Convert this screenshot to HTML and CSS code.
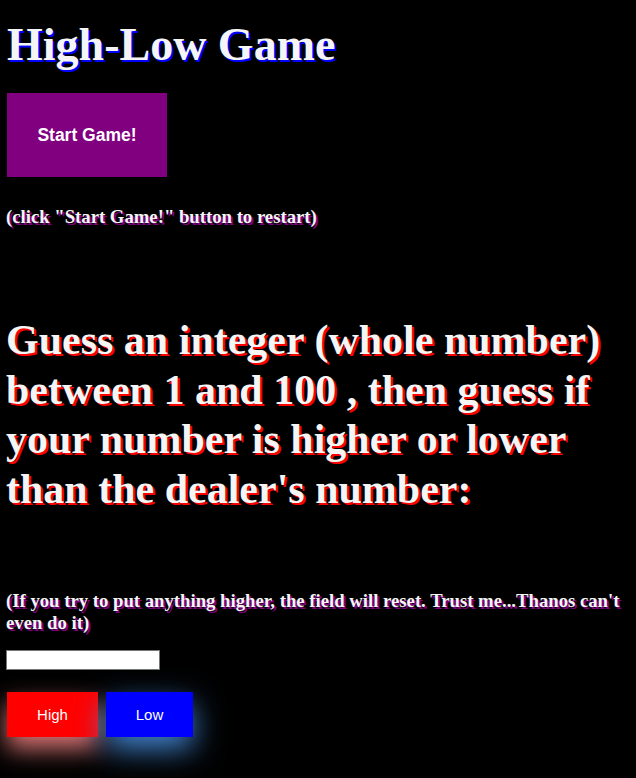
FILE: index.html
```html
<!DOCTYPE html>
<html>
<head>
<meta charset="utf-8">
<title>High-Low Game</title>
<link rel="stylesheet" href="styles.css">
</head>
<body>
<h1 class="title">High-Low Game</h1>
<button class="start-btn">Start Game!</button>
<h3 class="note">(click "Start Game!" button to restart)</h3>
<h1 class="prompt">Guess an integer (whole number) between 1 and 100 , then guess if your number is higher or lower than the dealer's number:</h1>
<h3 class="note">(If you try to put anything higher, the field will reset. Trust me...Thanos can't even do it)</h3>
<input class="guess" type="text">
<div class="choices">
  <button class="choice high">High</button>
  <button class="choice low">Low</button>
</div>
</body>
</html>
```

FILE: styles.css
```css
html, body {
  background: #000;
}
body {
  margin: 0;
  padding: 18px 6px 40px 6px;
  font-family: "Liberation Serif", "Times New Roman", serif;
  color: #f5f5f5;
}
.title {
  font-size: 46px;
  margin: 0 0 22px 1px;
  text-shadow: 2px 2px 0 #0000ff;
}
.start-btn {
  display: block;
  margin-left: 1px;
  width: 160px;
  height: 84px;
  background: #800080;
  color: #fff;
  border: none;
  font-family: "Liberation Sans", Arial, sans-serif;
  font-weight: bold;
  font-size: 17.5px;
}
.note {
  font-size: 18.72px;
  margin: 0;
  text-shadow: 2px 2px 0 #800080;
}
.start-btn + .note {
  margin-top: 29px;
}
.prompt {
  font-size: 42px;
  line-height: 49.5px;
  margin: 88px 0 0 0;
  text-shadow: 2px 2px 0 #ff0000;
}
.prompt + .note {
  margin-top: 76px;
}
.guess {
  display: block;
  margin-top: 16px;
  width: 154px;
  height: 20px;
  box-sizing: border-box;
  border: 1px solid #767676;
  background: #fff;
}
.choices {
  display: flex;
  gap: 8px;
  margin: 22px 0 0 1px;
}
.choice {
  height: 45px;
  border: none;
  color: #fff;
  font-family: "Liberation Sans", Arial, sans-serif;
  font-size: 15px;
}
.high {
  width: 91px;
  background: #ff0000;
  box-shadow: 0 12px 24px rgba(240, 128, 128, 0.9);
}
.low {
  width: 87px;
  background: #0000ff;
  box-shadow: 0 12px 30px rgba(70, 140, 220, 0.95);
}
```
